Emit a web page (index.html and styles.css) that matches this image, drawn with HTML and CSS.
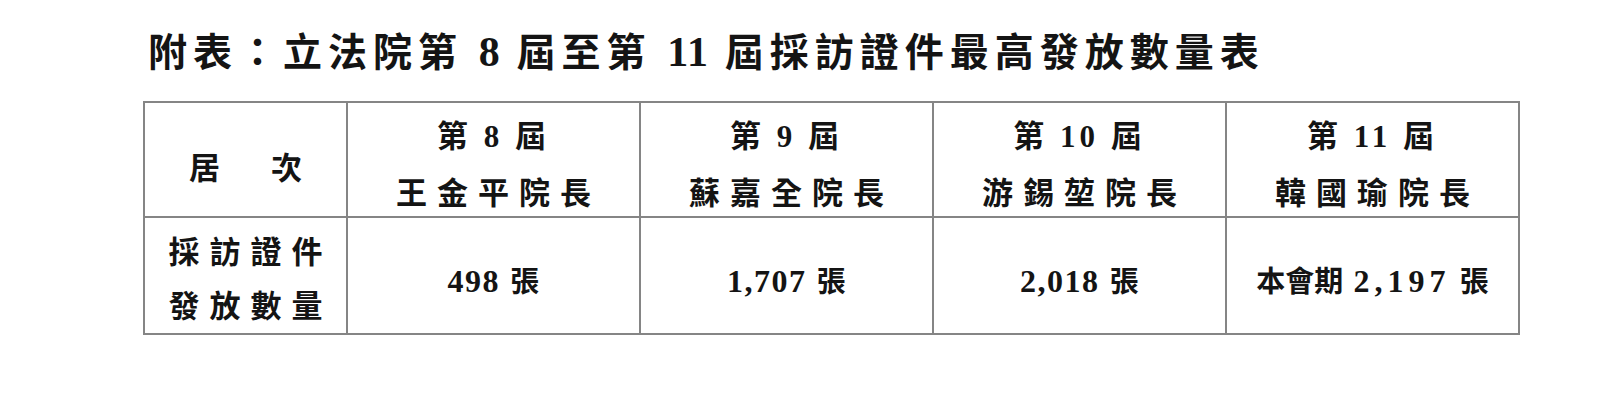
FILE: index.html
```html
<!DOCTYPE html>
<html lang="zh-Hant">
<head>
<meta charset="utf-8">
<title>附表</title>
<link rel="stylesheet" href="styles.css">
</head>
<body>
<h1 class="title">附表：立法院第 <span class="num">8</span> 屆至第 <span class="num">11</span> 屆採訪證件最高發放數量表</h1>
<table class="stats">
  <colgroup>
    <col class="c-label">
    <col class="c-term">
    <col class="c-term">
    <col class="c-term">
    <col class="c-term">
  </colgroup>
  <tr class="head">
    <th class="label">居　次</th>
    <th><div class="l1">第 8 屆</div><div class="l2">王金平院長</div></th>
    <th><div class="l1">第 9 屆</div><div class="l2">蘇嘉全院長</div></th>
    <th><div class="l1">第 10 屆</div><div class="l2">游錫堃院長</div></th>
    <th><div class="l1">第 11 屆</div><div class="l2">韓國瑜院長</div></th>
  </tr>
  <tr class="data">
    <th class="label"><div class="d1">採訪證件</div><div class="d2">發放數量</div></th>
    <td><span class="dnum">498</span> 張</td>
    <td><span class="dnum">1,707</span> 張</td>
    <td><span class="dnum">2,018</span> 張</td>
    <td>本會期 <span class="dnum wide">2,197</span> 張</td>
  </tr>
</table>
</body>
</html>
```

FILE: styles.css
```css
html, body {
  margin: 0;
  padding: 0;
  background: #ffffff;
}

body {
  width: 1600px;
  height: 414px;
  overflow: hidden;
  color: #141414;
  font-family: "Liberation Serif", "Noto Sans CJK TC", serif;
  font-weight: 700;
}

.title {
  margin: 28px 0 0 148px;
  font-size: 39px;
  line-height: 48px;
  letter-spacing: 6px;
  font-weight: 700;
  white-space: nowrap;
}

.title .num {
  font-size: 42px;
  letter-spacing: 1px;
}

.stats {
  margin: 24px 0 0 143px;
  border-collapse: collapse;
  table-layout: fixed;
  width: 1376px;
  font-size: 31px;
}

.c-label { width: 203px; }
.c-term { width: 293px; }

.stats th,
.stats td {
  border: 2px solid #858585;
  padding: 0;
  text-align: center;
  vertical-align: top;
  font-weight: 700;
  white-space: nowrap;
}

.head th {
  height: 115px;
  padding-top: 17px;
  box-sizing: border-box;
}

.head .l1 {
  line-height: 34px;
  letter-spacing: 4px;
}

.head .l2 {
  line-height: 34px;
  margin-top: 23px;
  letter-spacing: 10px;
  padding-left: 10px;
}

.head th.label {
  padding-top: 49px;
  line-height: 34px;
  letter-spacing: 10px;
  padding-left: 10px;
}

.data th,
.data td {
  height: 117px;
  box-sizing: border-box;
}

.data th.label {
  padding-top: 18px;
  letter-spacing: 10px;
  padding-left: 10px;
}

.data .d1,
.data .d2 {
  line-height: 34px;
}

.data .d2 {
  margin-top: 20px;
}

.data td {
  padding-top: 46px;
  line-height: 34px;
  font-size: 29px;
  letter-spacing: 0;
}

.dnum {
  font-size: 32px;
  letter-spacing: 1.5px;
  margin-right: 3px;
}

.dnum.wide {
  letter-spacing: 5px;
  margin-left: 3px;
  margin-right: 2px;
}
```
